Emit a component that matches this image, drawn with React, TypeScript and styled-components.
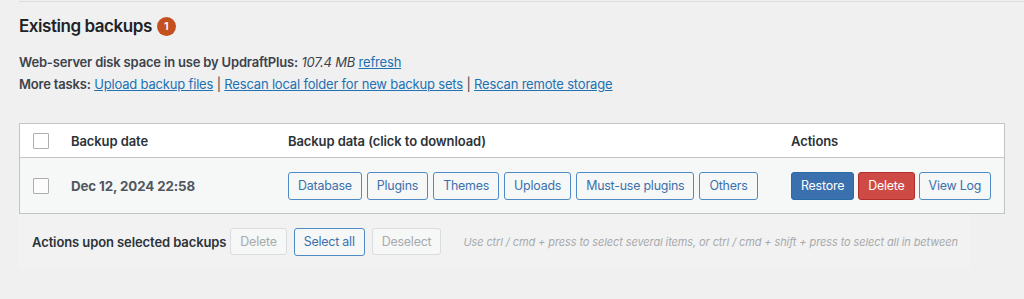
import React from 'react'
import styled, { createGlobalStyle } from 'styled-components'

const GlobalStyle = createGlobalStyle`
  html, body {
    margin: 0;
    padding: 0;
    background: #f0f0f1;
  }
  body {
    font-family: Inter, "Noto Sans", "Liberation Sans", sans-serif;
    font-size: 13px;
    color: #3c434a;
  }
`

const Page = styled.div`
  width: 1024px;
  height: 299px;
  overflow: hidden;
  padding-left: 19px;
  box-sizing: border-box;
`

const TopRule = styled.div`
  height: 1px;
  margin-top: 1px;
  background: #dcdcde;
`

const Heading = styled.h2`
  display: flex;
  align-items: center;
  gap: 5px;
  margin: 14px 0 0;
  font-size: 17px;
  font-weight: 600;
  color: #1d2327;
  letter-spacing: -0.45px;
`

const CountBadge = styled.span`
  display: inline-flex;
  align-items: center;
  justify-content: center;
  width: 19px;
  height: 19px;
  border-radius: 50%;
  background: #c5501f;
  color: #fff;
  font-size: 11px;
  font-weight: 600;
  letter-spacing: 0;
`

const InfoLine = styled.p`
  margin: 0;
  line-height: 22px;
  font-size: 13px;
  letter-spacing: -0.18px;
  &:first-of-type {
    margin-top: 15px;
  }
`

const Label = styled.strong`
  font-weight: 600;
`

const Link = styled.a`
  color: #2271b1;
  text-decoration: underline;
`

const Table = styled.div`
  width: 986px;
  margin-top: 28px;
  border: 1px solid #c3c4c7;
  box-sizing: border-box;
`

const Row = styled.div<{ $head?: boolean }>`
  display: grid;
  grid-template-columns: 51px 217px 503px 1fr;
  align-items: center;
  height: ${p => (p.$head ? '33px' : '55px')};
  background: ${p => (p.$head ? '#fff' : '#f6f7f7')};
  border-bottom: ${p => (p.$head ? '1px solid #c3c4c7' : 'none')};
`

const CheckCell = styled.div`
  padding-left: 13px;
  display: flex;
`

const Checkbox = styled.span`
  width: 14px;
  height: 14px;
  border: 1px solid #8c8f94;
  border-radius: 1px;
  background: #fff;
  opacity: 0.7;
`

const HeadCell = styled.div`
  font-weight: 600;
  color: #2c3338;
  letter-spacing: -0.1px;
`

const DateCell = styled.div`
  font-weight: 700;
  font-size: 13.3px;
  color: #50575e;
  letter-spacing: -0.1px;
`

const ButtonGroup = styled.div<{ $gap: number }>`
  display: flex;
  flex-shrink: 0;
  gap: ${p => p.$gap}px;
`

const Button = styled.button<{ $variant?: 'default' | 'primary' | 'danger' | 'disabled' }>`
  height: ${p => (p.$variant === 'disabled' ? '27px' : '28px')};
  padding: 0 9px;
  border-radius: 3px;
  font-family: inherit;
  font-size: 12.4px;
  letter-spacing: -0.2px;
  white-space: nowrap;
  cursor: pointer;
  border: 1px solid
    ${p =>
      p.$variant === 'primary'
        ? '#2b6aa8'
        : p.$variant === 'danger'
        ? '#b32d2e'
        : p.$variant === 'disabled'
        ? '#dcdcde'
        : '#4f8ac7'};
  background: ${p =>
    p.$variant === 'primary'
      ? '#3a70ad'
      : p.$variant === 'danger'
      ? '#cd4a45'
      : '#f6f7f7'};
  color: ${p =>
    p.$variant === 'primary' || p.$variant === 'danger'
      ? '#fff'
      : p.$variant === 'disabled'
      ? '#a7aaad'
      : '#3a70ad'};
`

const BulkBar = styled.div`
  display: flex;
  align-items: center;
  width: 951px;
  height: 55px;
  padding-left: 13px;
  box-sizing: border-box;
  background: #f2f2f2;
  white-space: nowrap;
`

const BulkLabel = styled.span`
  font-weight: 600;
  color: #2c3338;
  margin-right: 4px;
  letter-spacing: -0.1px;
`

const Hint = styled.em`
  margin-left: 22px;
  color: #a7aaad;
  font-size: 11px;
  letter-spacing: -0.1px;
`

const dataButtons = ['Database', 'Plugins', 'Themes', 'Uploads', 'Must-use plugins', 'Others']

export default function App() {
  return (
    <Page>
      <GlobalStyle />
      <TopRule />
      <Heading>
        Existing backups <CountBadge>1</CountBadge>
      </Heading>
      <InfoLine>
        <Label>Web-server disk space in use by UpdraftPlus:</Label> <em>107.4 MB</em>{' '}
        <Link href="#">refresh</Link>
      </InfoLine>
      <InfoLine>
        <Label>More tasks:</Label> <Link href="#">Upload backup files</Link> |{' '}
        <Link href="#">Rescan local folder for new backup sets</Link> |{' '}
        <Link href="#">Rescan remote storage</Link>
      </InfoLine>

      <Table>
        <Row $head>
          <CheckCell>
            <Checkbox />
          </CheckCell>
          <HeadCell>Backup date</HeadCell>
          <HeadCell>Backup data (click to download)</HeadCell>
          <HeadCell>Actions</HeadCell>
        </Row>
        <Row>
          <CheckCell>
            <Checkbox />
          </CheckCell>
          <DateCell>Dec 12, 2024 22:58</DateCell>
          <ButtonGroup $gap={5}>
            {dataButtons.map(label => (
              <Button key={label}>{label}</Button>
            ))}
          </ButtonGroup>
          <ButtonGroup $gap={4}>
            <Button $variant="primary">Restore</Button>
            <Button $variant="danger">Delete</Button>
            <Button>View Log</Button>
          </ButtonGroup>
        </Row>
      </Table>

      <BulkBar>
        <BulkLabel>Actions upon selected backups</BulkLabel>
        <ButtonGroup $gap={7}>
          <Button $variant="disabled">Delete</Button>
          <Button>Select all</Button>
          <Button $variant="disabled">Deselect</Button>
        </ButtonGroup>
        <Hint>Use ctrl / cmd + press to select several items, or ctrl / cmd + shift + press to select all in between</Hint>
      </BulkBar>
    </Page>
  )
}
